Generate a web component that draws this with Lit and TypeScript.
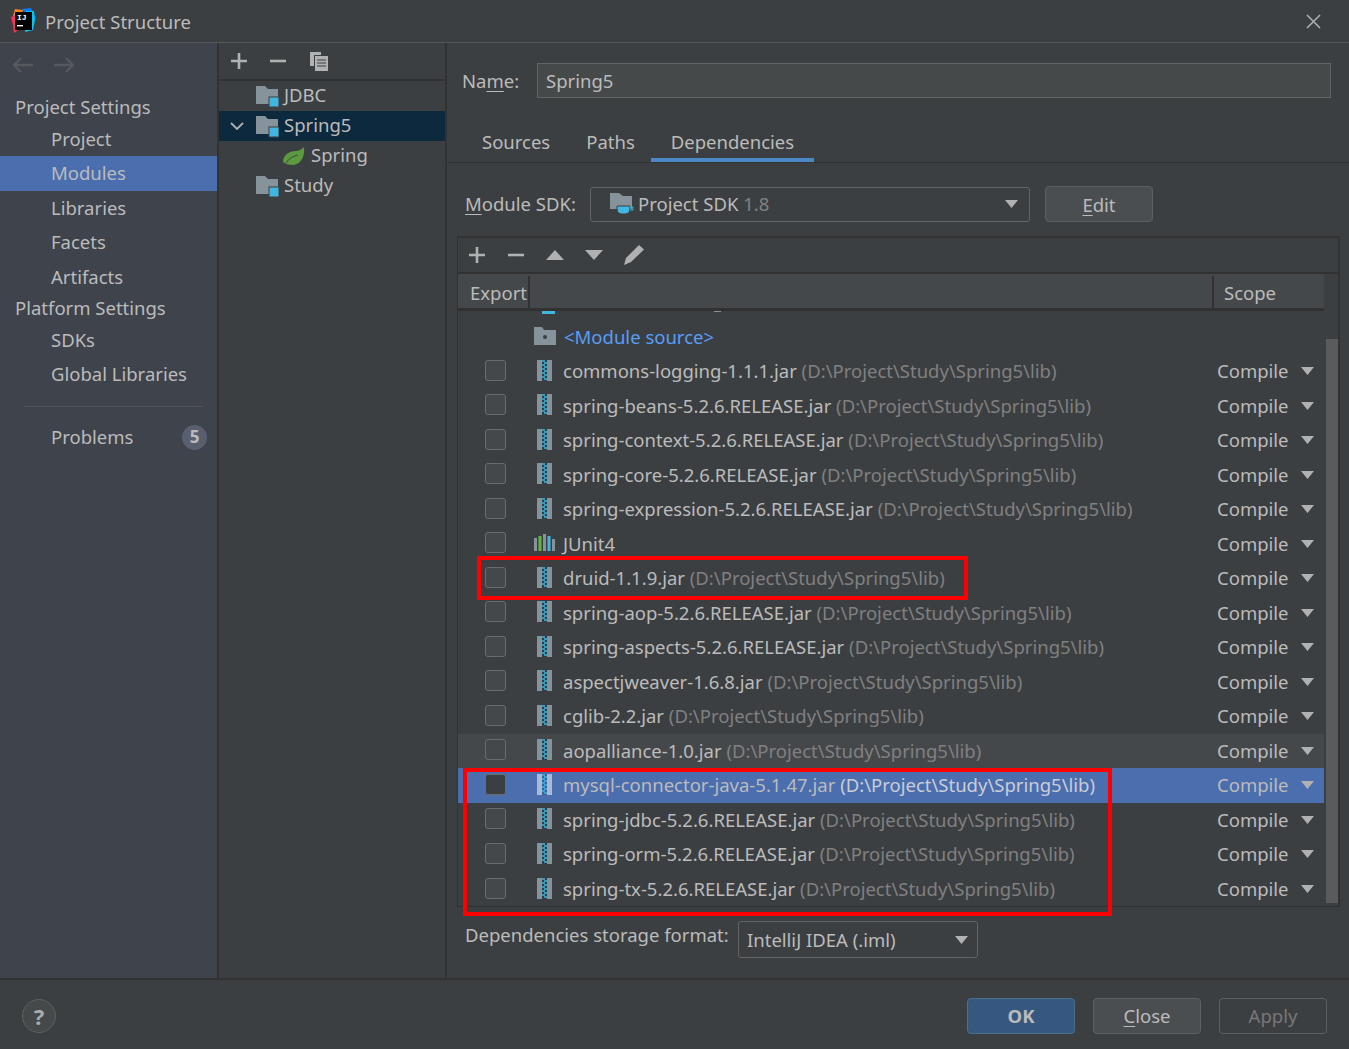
import { LitElement, css, html, svg } from 'lit'
import { customElement } from 'lit/decorators.js'

const lib = 'D:\\Project\\Study\\Spring5\\lib'

type Dep = { name: string; path?: boolean; kind?: string; state?: string }

const deps: Dep[] = [
  { name: 'commons-logging-1.1.1.jar', path: true },
  { name: 'spring-beans-5.2.6.RELEASE.jar', path: true },
  { name: 'spring-context-5.2.6.RELEASE.jar', path: true },
  { name: 'spring-core-5.2.6.RELEASE.jar', path: true },
  { name: 'spring-expression-5.2.6.RELEASE.jar', path: true },
  { name: 'JUnit4', kind: 'junit' },
  { name: 'druid-1.1.9.jar', path: true },
  { name: 'spring-aop-5.2.6.RELEASE.jar', path: true },
  { name: 'spring-aspects-5.2.6.RELEASE.jar', path: true },
  { name: 'aspectjweaver-1.6.8.jar', path: true },
  { name: 'cglib-2.2.jar', path: true },
  { name: 'aopalliance-1.0.jar', path: true, state: 'hover' },
  { name: 'mysql-connector-java-5.1.47.jar', path: true, state: 'selected' },
  { name: 'spring-jdbc-5.2.6.RELEASE.jar', path: true },
  { name: 'spring-orm-5.2.6.RELEASE.jar', path: true },
  { name: 'spring-tx-5.2.6.RELEASE.jar', path: true },
]

const plus = html`<svg width="16" height="16" viewBox="0 0 16 16"><path d="M8 0v16M0 8h16" stroke="#afb1b3" stroke-width="2.6" fill="none"/></svg>`
const minus = html`<svg width="16" height="16" viewBox="0 0 16 16"><path d="M0 8h16" stroke="#afb1b3" stroke-width="2.6" fill="none"/></svg>`

const moduleFolder = html`<svg class="ic" width="23" height="23" viewBox="0 0 23 23">
  <path d="M0 1h9l3 3h10v15H0z" fill="#87939a"/>
  <rect x="13" y="12" width="10" height="10" fill="#40b6e0" stroke="#3c3f41" stroke-width="1"/>
</svg>`

const jar = (selected: boolean) => html`<svg class="ic" width="15" height="21" viewBox="0 0 15 21">
  <rect width="5" height="21" fill="${selected ? '#a8bad8' : '#87939a'}"/>
  <rect x="10" width="5" height="21" fill="${selected ? '#a8bad8' : '#87939a'}"/>
  <rect x="5" width="5" height="21" fill="${selected ? '#3f5f9a' : '#2f3f45'}"/>
  <path d="M5 1h3M7 3h3M5 5h3M7 7h3M5 9h3M7 11h3M5 13h3M7 15h3M5 17h3M7 19h3" stroke="#40b6e0" stroke-width="1.3"/>
</svg>`

const junit = html`<svg class="ic" width="22" height="18" viewBox="0 0 22 18">
  <rect x="0" y="4" width="3" height="13" fill="#87939a"/>
  <rect x="4.5" y="2" width="3" height="15" fill="#62b543"/>
  <rect x="9" y="0" width="3" height="17" fill="#87939a"/>
  <rect x="13.5" y="2" width="3" height="15" fill="#40b6e0"/>
  <rect x="18" y="5" width="3" height="12" fill="#87939a"/>
</svg>`

const arrowDown = html`<svg class="tri" width="13" height="8" viewBox="0 0 13 8"><path d="M0 0h13L6.5 8z" fill="#afb1b3"/></svg>`

@customElement('app-root')
export class AppRoot extends LitElement {
  static styles = css`
    :host {
      display: block;
      width: 1349px;
      height: 1049px;
      position: relative;
      overflow: hidden;
      background: #3c3f41;
      color: #bbbbbb;
      font-family: 'Noto Sans', sans-serif;
      font-size: 18.5px;
      line-height: 26px;
    }
    * { box-sizing: border-box; }
    u { text-underline-offset: 3px; }
    svg { display: block; flex: none; }

    .titlebar {
      height: 43px;
      display: flex;
      align-items: center;
      padding: 0 28px 0 10px;
      border-bottom: 1px solid #555759;
    }
    .titlebar .name { margin-left: 9px; flex: 1; padding-top: 2px; }

    .main { display: flex; height: 937px; border-bottom: 2px solid #323232; }

    .nav {
      width: 219px;
      flex: none;
      background: #3e434c;
      border-right: 2px solid #323232;
    }
    .history { display: flex; gap: 19px; padding: 13px 0 0 12px; height: 49px; }
    .head { height: 29.8px; display: flex; align-items: center; padding-left: 15px; }
    .head.next { height: 28.7px; }
    .item { height: 34.4px; display: flex; align-items: center; padding-left: 51px; }
    .item.on { background: #4b6eaf; }
    .sep { height: 1px; margin: 15px 14px 13px 24px; background: #50535a; }
    .problems { justify-content: space-between; padding-right: 10px; }
    .badge {
      width: 25px;
      height: 25px;
      border-radius: 50%;
      background: #5a5f70;
      font-weight: 700;
      font-size: 17px;
      display: flex;
      align-items: center;
      justify-content: center;
    }

    .tree { width: 228px; flex: none; border-right: 2px solid #323232; }
    .tree-tools {
      height: 38px;
      display: flex;
      align-items: center;
      gap: 23px;
      padding-left: 12px;
      border-bottom: 2px solid #323232;
    }
    .node { height: 30px; display: flex; align-items: center; padding-left: 37px; gap: 5px; }
    .node span.t { margin-top: -2px; }
    .node.on { background: #0d293e; padding-left: 11px; }
    .node.child { padding-left: 64px; gap: 6px; }
    .chev { width: 21px; }

    .pane { flex: 1; min-width: 0; padding: 0 9px 0 10px; }
    .name-row { display: flex; align-items: center; height: 35px; margin-top: 20px; padding-left: 5px; }
    .name-row label { width: 75px; }
    .field {
      width: 794px;
      height: 35px;
      background: #45494a;
      border: 1px solid #646464;
      padding-left: 8px;
      display: flex;
      align-items: center;
    }
    .tabs {
      display: flex;
      margin: 26px -9px 0 -10px;
      padding-left: 15px;
      height: 39px;
      border-bottom: 1px solid #323232;
    }
    .tab { padding: 0 20px 2px; height: 38px; display: flex; align-items: center; margin-right: -4px; }
    .tab.on { border-bottom: 4px solid #4a88c7; padding: 2px 20px 0; }

    .sdk-row { display: flex; align-items: center; height: 36px; margin-top: 23px; padding-left: 8px; }
    .sdk-row label { width: 125px; }
    .combo {
      height: 35px;
      border: 1px solid #646464;
      border-radius: 3px;
      display: flex;
      align-items: center;
      justify-content: space-between;
      padding: 0 11px 0 19px;
      background: #3c3f41;
    }
    .combo .val { display: flex; align-items: center; gap: 4px; }
    .combo.sdk { width: 440px; }
    .dim { color: #808080; }
    .btn {
      height: 36px;
      width: 108px;
      border: 1px solid #5e6060;
      border-radius: 4px;
      background: #4b4e50;
      display: flex;
      align-items: center;
      justify-content: center;
    }
    .edit { margin-left: 15px; padding-top: 2px; }

    .table {
      margin-top: 14px;
      height: 671px;
      border: 1px solid #323232;
      border-width: 2px 2px 1px 1px;
      position: relative;
      display: flex;
      flex-direction: column;
    }
    .tools {
      height: 36px;
      flex: none;
      display: flex;
      align-items: center;
      gap: 21px;
      padding-left: 11px;
      border-bottom: 2px solid #323232;
    }
    .tools > :nth-child(1) { margin-right: 2px; }
    .tools > :nth-child(2) { margin-right: 1px; }
    .header {
      flex: none;
      height: 37px;
      width: 866px;
      background: #45484a;
      border-bottom: 3px solid #323232;
      display: flex;
      align-items: flex-end;
    }
    .header .export { width: 72px; padding: 1px 0 0 12px; border-right: 2px solid #323232; height: 32px; line-height: 32px; }
    .header .fill { flex: 1; }
    .header .scope { width: 112px; padding: 1px 0 0 10px; border-left: 2px solid #323232; height: 32px; line-height: 32px; }

    .rows { flex: 1; width: 866px; overflow: hidden; }
    .peek { height: 8.5px; position: relative; overflow: hidden; }
    .peek i { position: absolute; top: 0; background: #87939a; }
    .row { height: 34.53px; display: flex; align-items: center; }
    .row.hover { background: #45484a; }
    .row.selected { background: #4b6eaf; }
    .check {
      width: 21px;
      height: 21px;
      margin: 0 0 2px 27px;
      border: 1px solid #6b6b6b;
      border-radius: 3px;
      background: #43494a;
      flex: none;
    }
    .row.selected .check { background: #3c3f41; }
    .icon-cell { width: 57px; flex: none; display: flex; padding-left: 31px; margin-bottom: 2px; }
    .icon-cell.wide { padding-left: 28px; }
    .label { flex: 1; white-space: nowrap; }
    .row.selected .label .dim { color: #c8cdd6; }
    .scope-cell { width: 107px; flex: none; display: flex; align-items: center; justify-content: space-between; padding-right: 10px; }
    .src-row { padding-left: 48px; }
    .src { color: #589df6; margin-left: 1px; }

    .scrollbar {
      position: absolute;
      right: 0;
      top: 101px;
      width: 12px;
      height: 564px;
      background: #595b5d;
    }

    .format { display: flex; align-items: center; height: 36px; margin-top: 14px; padding-left: 8px; }
    .format label { width: 273px; margin-top: -9px; }
    .combo.iml { width: 240px; padding: 1px 9px 0 8px; height: 37px; }

    .footer {
      height: 69px;
      display: flex;
      align-items: center;
      padding: 2px 22px 0 22px;
      gap: 18px;
    }
    .help {
      width: 34px;
      height: 34px;
      border-radius: 50%;
      border: 1px solid #5e6060;
      background: #45494a;
      color: #a9abad;
      font-size: 22px;
      display: flex;
      align-items: center;
      justify-content: center;
      font-weight: 700;
      margin-right: auto;
    }
    .ok { background: #365880; border-color: #4c708c; font-weight: 700; }
    .ghost { background: #3c3f41; color: #777777; }

    .mark { position: absolute; border: 4px solid #ff0000; pointer-events: none; }
    .mark.one { left: 477px; top: 556px; width: 491px; height: 44px; }
    .mark.two { left: 463px; top: 768px; width: 649px; height: 148px; }
  `

  private _logo() {
    return html`<svg width="26" height="26" viewBox="0 0 26 26">
      <path d="M5 1l8 1-1 6H3z" fill="#fc801d"/>
      <path d="M1 9l8-3 2 14-7 5-1-8z" fill="#fe315d"/>
      <path d="M12 1l9-1 5 10-6 3z" fill="#087cfa"/>
      <path d="M16 3l8 0 1 9-2 10-8 2z" fill="#07c3f2"/>
      <rect x="5" y="4" width="17" height="18" fill="#000"/>
      ${svg`<text x="7" y="12" font-size="8" font-weight="700" font-family="Liberation Mono" fill="#fff">IJ</text>`}
      <rect x="7" y="17" width="6" height="1.4" fill="#fff"/>
    </svg>`
  }

  private _row(d: Dep) {
    return html`<div class="row ${d.state ?? ''}">
      <span class="check"></span>
      <span class="icon-cell ${d.kind === 'junit' ? 'wide' : ''}">${d.kind === 'junit' ? junit : jar(d.state === 'selected')}</span>
      <span class="label">${d.name}${d.path ? html` <span class="dim">(${lib})</span>` : null}</span>
      <span class="scope-cell">Compile ${arrowDown}</span>
    </div>`
  }

  render() {
    return html`
      <div class="titlebar">
        ${this._logo()}
        <span class="name">Project Structure</span>
        <svg width="15" height="15" viewBox="0 0 15 15"><path d="M1 1l13 13M14 1L1 14" stroke="#afb1b3" stroke-width="1.5"/></svg>
      </div>

      <div class="main">
        <aside class="nav">
          <div class="history">
            <svg width="22" height="18" viewBox="0 0 22 18"><path d="M21 9H2M9 2L2 9l7 7" stroke="#55585c" stroke-width="2.4" fill="none"/></svg>
            <svg width="22" height="18" viewBox="0 0 22 18"><path d="M1 9h19M13 2l7 7-7 7" stroke="#55585c" stroke-width="2.4" fill="none"/></svg>
          </div>
          <div class="head">Project Settings</div>
          <div class="item">Project</div>
          <div class="item on">Modules</div>
          <div class="item">Libraries</div>
          <div class="item">Facets</div>
          <div class="item">Artifacts</div>
          <div class="head next">Platform Settings</div>
          <div class="item">SDKs</div>
          <div class="item">Global Libraries</div>
          <div class="sep"></div>
          <div class="item problems">Problems <span class="badge">5</span></div>
        </aside>

        <section class="tree">
          <div class="tree-tools">
            ${plus}${minus}
            <svg width="20" height="20" viewBox="0 0 20 20">
              <path d="M1 1h11v3H5v11H1z" fill="#afb1b3"/>
              <path d="M6 5h13v15H6z" fill="#afb1b3"/>
              <path d="M8 9h9M8 12h9M8 15h9" stroke="#3c3f41" stroke-width="1.2"/>
            </svg>
          </div>
          <div class="node">${moduleFolder}<span class="t">JDBC</span></div>
          <div class="node on">
            <span class="chev"><svg width="14" height="9" viewBox="0 0 14 9"><path d="M1 1l6 6 6-6" stroke="#afb1b3" stroke-width="1.8" fill="none"/></svg></span>
            ${moduleFolder}<span class="t">Spring5</span>
          </div>
          <div class="node child">
            <svg class="ic" width="22" height="19" viewBox="0 0 22 19"><path d="M21 0c1 8-2 17-11 18-4 0-8-1-10-3 0-8 8-11 13-11 3 0 6-2 8-4z" fill="#5c9a3f"/><path d="M3 16c3-5 8-7 12-8" stroke="#3c3f41" stroke-width="1" fill="none"/></svg>
            <span class="t">Spring</span>
          </div>
          <div class="node">${moduleFolder}<span class="t">Study</span></div>
        </section>

        <section class="pane">
          <div class="name-row">
            <label>Na<u>m</u>e:</label>
            <div class="field">Spring5</div>
          </div>

          <div class="tabs">
            <div class="tab">Sources</div>
            <div class="tab">Paths</div>
            <div class="tab on">Dependencies</div>
          </div>

          <div class="sdk-row">
            <label><u>M</u>odule SDK:</label>
            <div class="combo sdk">
              <span class="val">
                <svg width="24" height="24" viewBox="0 0 24 24">
                  <path d="M0 1h9l4 3h9v13H0z" fill="#87939a"/>
                  <path d="M7 14h13v3c0 3-2 5-5 5h-3c-3 0-5-2-5-5z" fill="#40b6e0" stroke="#3c3f41"/>
                  <path d="M20 15h3v3h-3" stroke="#40b6e0" fill="none"/>
                </svg>
                <span>Project SDK <span class="dim">1.8</span></span>
              </span>
              ${arrowDown}
            </div>
            <div class="btn edit"><span><u>E</u>dit</span></div>
          </div>

          <div class="table">
            <div class="tools">
              ${plus}${minus}
              <svg width="18" height="10" viewBox="0 0 18 10"><path d="M9 0l9 10H0z" fill="#afb1b3"/></svg>
              <svg width="18" height="10" viewBox="0 0 18 10"><path d="M0 0h18L9 10z" fill="#afb1b3"/></svg>
              <svg width="20" height="20" viewBox="0 0 20 20"><path d="M15 0l5 4.500L7 17l-7 3 2-7z" fill="#afb1b3"/></svg>
            </div>
            <div class="header">
              <div class="export">Export</div>
              <div class="fill"></div>
              <div class="scope">Scope</div>
            </div>
            <div class="rows">
              <div class="peek">
                <i style="left: 84px; width: 13px; height: 3px; background: #40b6e0"></i>
                <i style="left: 256px; width: 7px; height: 1px"></i>
              </div>
              <div class="row src-row">
                <span class="icon-cell wide">
                  <svg class="ic" width="22" height="18" viewBox="0 0 22 18"><path d="M0 0h8l2 3h12v15H0z" fill="#87939a"/><circle cx="11" cy="10" r="2" fill="#3c3f41"/></svg>
                </span>
                <span class="label"><span class="src">&lt;Module source&gt;</span></span>
              </div>
              ${deps.map((d) => this._row(d))}
            </div>
            <div class="scrollbar"></div>
          </div>

          <div class="format">
            <label>Dependencies storage format:</label>
            <div class="combo iml"><span>IntelliJ IDEA (.iml)</span>${arrowDown}</div>
          </div>
        </section>
      </div>

      <footer class="footer">
        <div class="help">?</div>
        <div class="btn ok">OK</div>
        <div class="btn"><span><u>C</u>lose</span></div>
        <div class="btn ghost">Apply</div>
      </footer>

      <div class="mark one"></div>
      <div class="mark two"></div>
    `
  }
}
